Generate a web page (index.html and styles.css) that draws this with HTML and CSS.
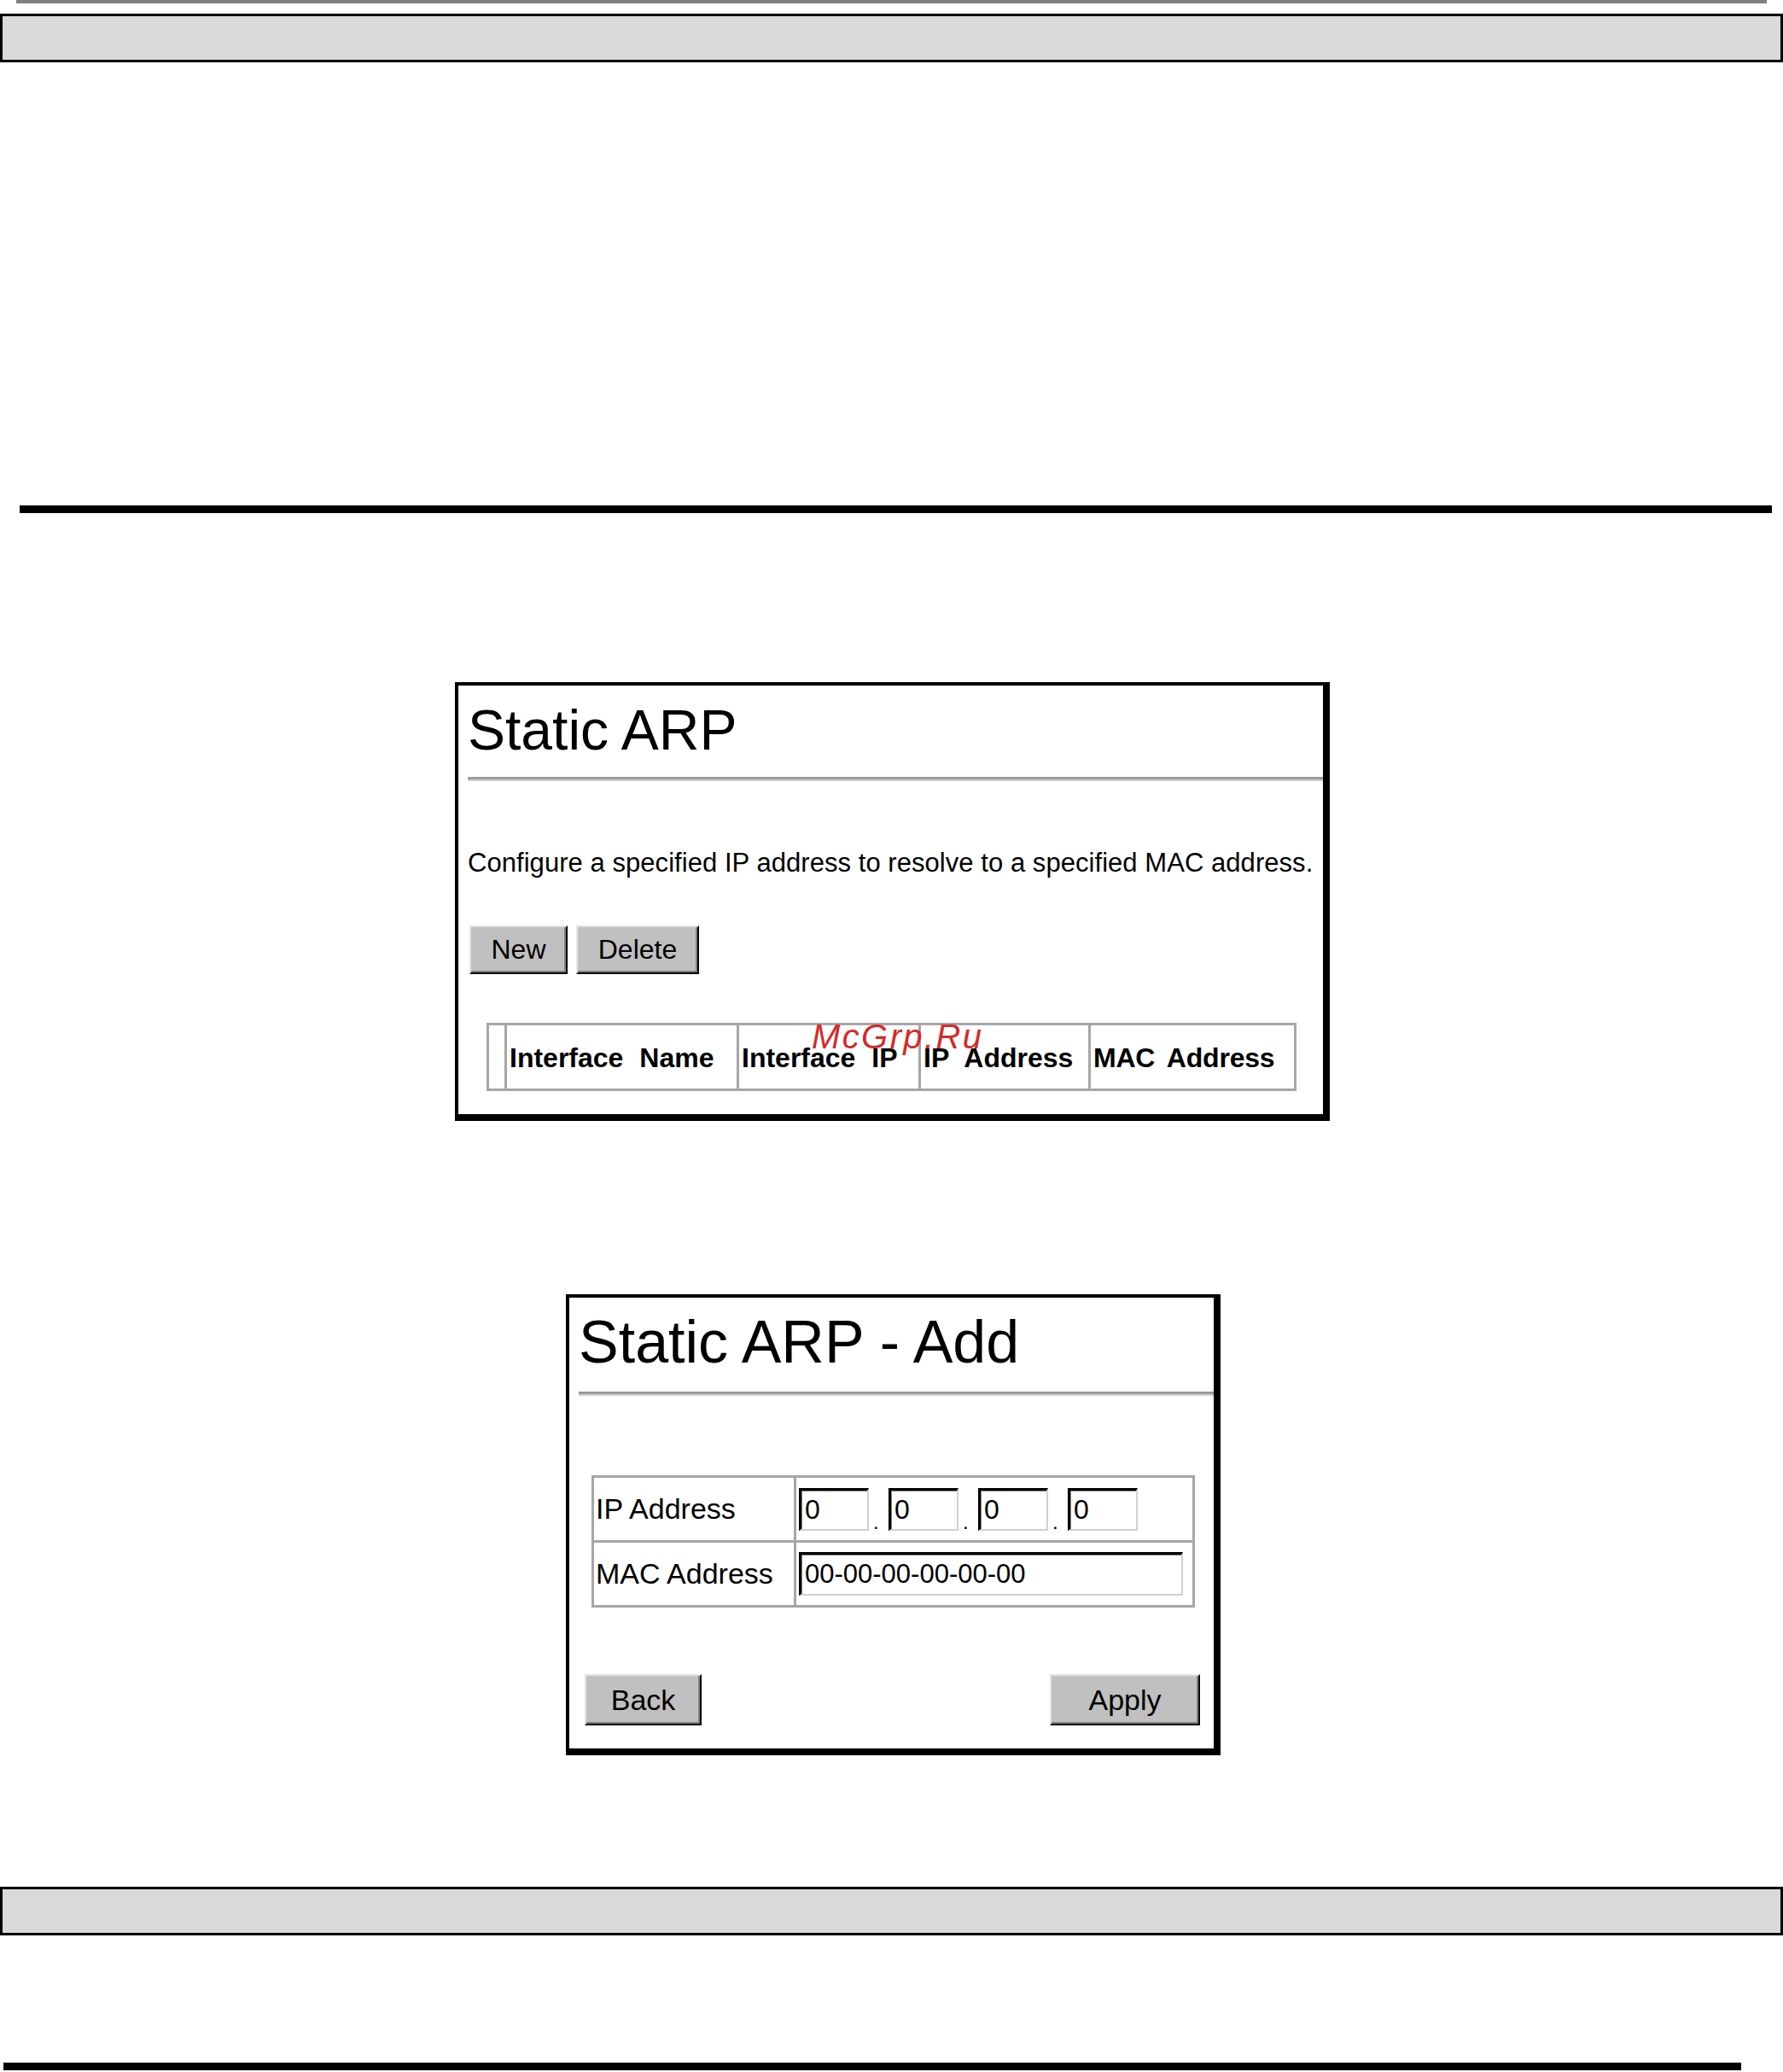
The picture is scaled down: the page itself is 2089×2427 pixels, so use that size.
FILE: index.html
```html
<!DOCTYPE html>
<html>
<head>
<meta charset="utf-8">
<title>Static ARP</title>
<link rel="stylesheet" href="styles.css">
</head>
<body>
<div class="topline"></div>
<div class="graybar"></div>
<div class="rule"></div>

<div class="panel p1">
  <div class="title">Static ARP</div>
  <div class="hr hr1"></div>
  <p class="desc">Configure a specified IP address to resolve to a specified MAC address.</p>
  <div class="btnrow">
    <button class="btn btn-new">New</button>
    <button class="btn btn-del">Delete</button>
  </div>
  <table class="list">
    <colgroup>
      <col class="c0"><col class="c1"><col class="c2"><col class="c3"><col class="c4">
    </colgroup>
    <tr>
      <th></th>
      <th>Interface Name</th>
      <th>Interface IP</th>
      <th>IP Address</th>
      <th class="mac-h">MAC Address</th>
    </tr>
  </table>
  <span class="watermark">McGrp.Ru</span>
</div>

<div class="panel p2">
  <div class="title title-add">Static ARP - Add</div>
  <div class="hr hr2"></div>
  <table class="form">
    <colgroup><col class="fl"><col class="fv"></colgroup>
    <tr>
      <td class="label">IP Address</td>
      <td class="value">
        <div class="iprow">
          <span class="field ip">0</span><span class="dot">.</span><span class="field ip">0</span><span class="dot">.</span><span class="field ip">0</span><span class="dot">.</span><span class="field ip">0</span>
        </div>
      </td>
    </tr>
    <tr>
      <td class="label">MAC Address</td>
      <td class="value"><span class="field mac">00-00-00-00-00-00</span></td>
    </tr>
  </table>
  <div class="actions">
    <button class="btn btn-back">Back</button>
    <button class="btn btn-apply">Apply</button>
  </div>
</div>

<div class="graybar bar2"></div>
<div class="rule rule-bottom"></div>
</body>
</html>
```
FILE: styles.css
```css
html, body {
  margin: 0;
  padding: 0;
  background: #fff;
}
body {
  font-family: "Liberation Sans", Arial, sans-serif;
  color: #000;
  overflow: hidden;
}
.topline {
  height: 4px;
  margin: 0 19px;
  background: #808080;
}
.graybar {
  margin-top: 12px;
  height: 51px;
  border: 3px solid #000;
  background: #d9d9d9;
}
.rule {
  margin-top: 519px;
  margin-left: 23px;
  width: 2053px;
  height: 9px;
  background: #000;
}
.panel {
  position: relative;
  box-sizing: border-box;
  background: #fff;
  border-style: solid;
  border-color: #000;
  border-width: 4px 8px 8px 4px;
  padding: 14px 0 0 11px;
}
.p1 {
  margin-top: 198px;
  margin-left: 533px;
  width: 1025px;
  height: 514px;
}
.p2 {
  margin-top: 203px;
  margin-left: 663px;
  width: 767px;
  height: 540px;
}
.title {
  font-size: 66px;
  line-height: 76px;
  white-space: nowrap;
}
.title-add {
  font-size: 70px;
}
.hr {
  height: 0;
  border-top: 3px solid #9a9a9a;
  border-bottom: 2px solid #d0d0d0;
}
.hr1 { margin-top: 17px; }
.hr2 { margin-top: 20px; }
.desc {
  margin: 78px 0 0 0;
  font-size: 31px;
  line-height: 36px;
  letter-spacing: 0.05px;
  white-space: nowrap;
}
.btnrow {
  display: flex;
  gap: 10px;
  margin: 55px 0 0 2px;
}
.btn {
  font-family: "Liberation Sans", Arial, sans-serif;
  font-size: 32px;
  color: #000;
  background: #c0c0c0;
  border-style: solid;
  border-width: 2px;
  border-color: #e4e4e4 #000 #000 #e4e4e4;
  box-shadow: inset -2px -2px 0 #808080;
  padding: 0;
  box-sizing: border-box;
}
.btn-new { width: 115px; height: 57px; }
.btn-del { width: 144px; height: 57px; }
.list {
  margin: 57px 0 0 22px;
  width: 946px;
  table-layout: fixed;
  border-collapse: collapse;
  background: #fff;
}
.list .c0 { width: 21px; }
.list .c1 { width: 272px; }
.list .c2 { width: 213px; }
.list .c3 { width: 199px; }
.list .c4 { width: 241px; }
.list th {
  height: 71px;
  border: 3px solid #a6a6a6;
  padding: 3px 0 0 3px;
  text-align: left;
  font-size: 32px;
  font-weight: bold;
  word-spacing: 10px;
  white-space: nowrap;
  overflow: visible;
}
.list th.mac-h {
  word-spacing: 6px;
  letter-spacing: -0.2px;
}
.watermark {
  position: absolute;
  left: 414px;
  top: 388px;
  font-size: 40px;
  line-height: 46px;
  font-style: italic;
  letter-spacing: 2.4px;
  color: #d42a2a;
  white-space: nowrap;
}
.form {
  margin: 93px 0 0 15px;
  width: 704px;
  table-layout: fixed;
  border-collapse: collapse;
}
.form .fl { width: 237px; }
.form .fv { width: 467px; }
.form td {
  height: 73px;
  border: 3px solid #a6a6a6;
  padding: 0;
  vertical-align: middle;
  font-size: 34px;
  white-space: nowrap;
}
.form .label { padding-left: 2px; }
.form .value { padding-left: 3px; }
.iprow {
  display: flex;
  align-items: flex-end;
}
.field {
  display: inline-block;
  box-sizing: border-box;
  background: #fff;
  border-style: solid;
  border-width: 3px 2px 2px 3px;
  border-color: #000 #d0d0d0 #d0d0d0 #000;
  box-shadow: inset 1px 1px 0 #808080;
  font-size: 32px;
  line-height: 44px;
  padding-left: 4px;
  vertical-align: middle;
}
.ip { width: 82px; height: 50px; }
.dot {
  width: 23px;
  padding-left: 5px;
  box-sizing: border-box;
  font-size: 24px;
  line-height: 20px;
}
.mac { width: 450px; height: 51px; line-height: 45px; font-size: 31px; }
.actions {
  display: flex;
  justify-content: space-between;
  margin: 78px 16px 0 7px;
}
.btn-back { width: 137px; height: 60px; font-size: 34px; }
.btn-apply { width: 176px; height: 60px; font-size: 34px; }
.bar2 { margin-top: 154px; }
.rule-bottom {
  margin-top: 149px;
  margin-left: 4px;
  width: 2036px;
}
```
